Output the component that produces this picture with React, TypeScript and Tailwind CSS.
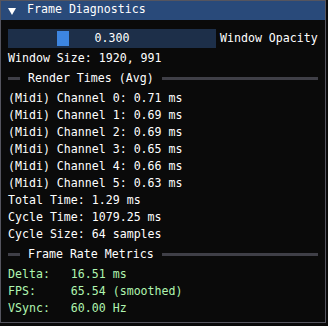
const mono = { fontFamily: '"DejaVu Sans Mono", "Liberation Mono", monospace' };

const channels = [0.71, 0.69, 0.69, 0.65, 0.66, 0.63];

const SeparatorText = ({ label }: { label: string }) => (
  <div className="flex h-[19px] items-center">
    <div className="h-[3px] w-[12px] bg-[#3f3f47]" />
    <span className="ml-[8px] h-[13px] leading-[13px] text-white">{label}</span>
    <div className="ml-[8px] h-[3px] flex-1 bg-[#3f3f47]" />
  </div>
);

const Line = ({ children, green }: { children: string; green?: boolean }) => (
  <div className={`h-[13px] whitespace-pre leading-[13px] ${green ? 'text-[#b0f5b0]' : 'text-white'}`}>
    {children}
  </div>
);

export default function App() {
  return (
    <div className="h-[326px] w-[328px] bg-[#0a0a0a] text-[11.6px]" style={mono}>
      <div className="flex h-[323px] w-[326px] flex-col border border-[#55555f] bg-[#0a0a0a]">
        <div className="flex h-[19px] items-start bg-[#294a7a] pl-[7px] pt-[2px]">
          <svg className="mt-[5px]" width="8" height="7" viewBox="0 0 8 7">
            <polygon points="0,0 8,0 4,7" fill="#ffffff" />
          </svg>
          <span className="ml-[11px] h-[13px] leading-[13px] text-white">Frame Diagnostics</span>
        </div>

        <div className="flex flex-col gap-[4px] pl-[7px] pr-[7px] pt-[9px]">
          <div className="flex items-center">
            <div className="relative flex h-[19px] w-[208px] items-center justify-center bg-[#1d2f49]">
              <div className="absolute left-[49px] top-[2px] h-[15px] w-[12px] bg-[#3d85e0]" />
              <span className="relative h-[13px] leading-[13px] text-white">0.300</span>
            </div>
            <span className="ml-[4px] h-[13px] leading-[13px] text-white">Window Opacity</span>
          </div>

          <Line>Window Size: 1920, 991</Line>

          <SeparatorText label="Render Times (Avg)" />

          {channels.map((ms, index) => (
            <Line key={index}>{`(Midi) Channel ${index}: ${ms.toFixed(2)} ms`}</Line>
          ))}
          <Line>Total Time: 1.29 ms</Line>
          <Line>Cycle Time: 1079.25 ms</Line>
          <Line>Cycle Size: 64 samples</Line>

          <SeparatorText label="Frame Rate Metrics" />

          <Line green>Delta:   16.51 ms</Line>
          <Line green>FPS:     65.54 (smoothed)</Line>
          <Line green>VSync:   60.00 Hz</Line>
        </div>
      </div>
    </div>
  );
}
